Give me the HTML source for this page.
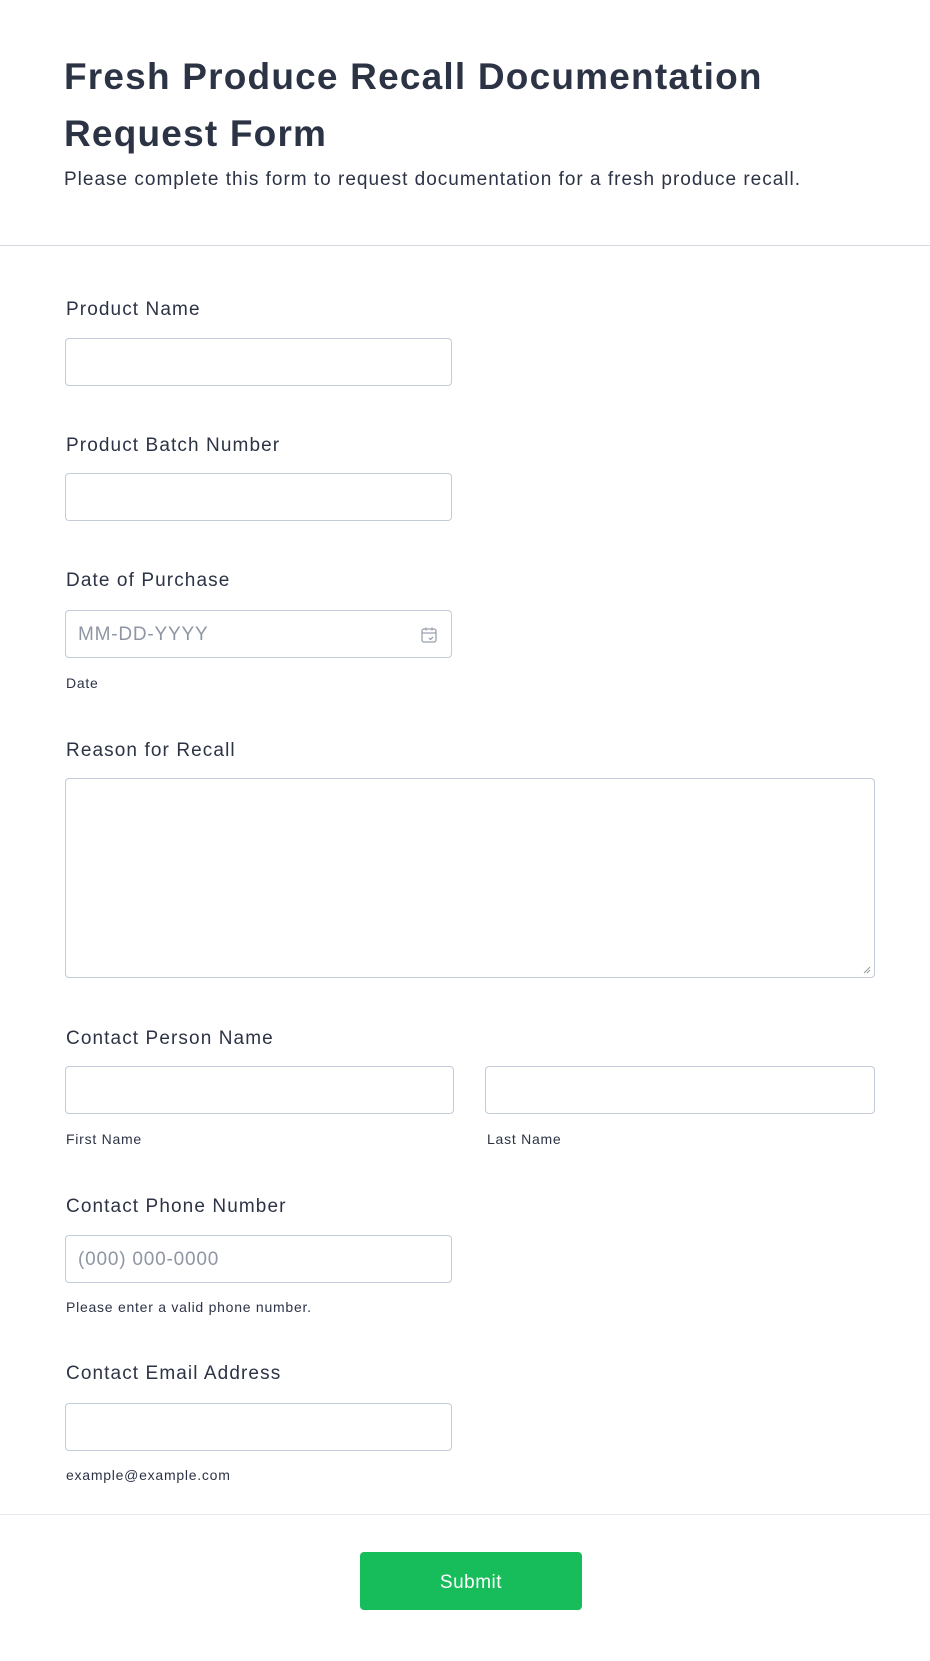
<!DOCTYPE html>
<html><head><meta charset="utf-8"><style>
*{box-sizing:border-box;margin:0;padding:0}
body{width:930px;height:1661px;background:#fff;font-family:"Liberation Sans",Arial,sans-serif;color:#2c3345;position:relative;overflow:hidden}
.a{position:absolute}
h1{position:absolute;left:64px;top:48px;font-size:37px;line-height:57px;font-weight:bold;color:#2c3345;width:860px;letter-spacing:1.2px}
.sub{left:64px;top:169px;font-size:19px;letter-spacing:1px}
.hr{left:0;width:930px;height:1px;background:#d3d7df}
.lab{left:66px;font-size:19px;color:#2c3345;letter-spacing:1.1px}
.in{border:1px solid #c3cad8;border-radius:4px;background:#fff;height:48px}
.sm{font-size:14px;color:#2c3345;letter-spacing:0.75px}
.ph{font-size:19px;color:#8f96a3;left:12px;top:13px;letter-spacing:0.8px}
</style></head><body>
<h1>Fresh Produce Recall Documentation Request Form</h1>
<div class="a sub">Please complete this form to request documentation for a fresh produce recall.</div>
<div class="a hr" style="top:245px"></div>

<div class="a lab" style="top:299px">Product Name</div>
<div class="a in" style="left:65px;top:338px;width:387px"></div>

<div class="a lab" style="top:435px">Product Batch Number</div>
<div class="a in" style="left:65px;top:473px;width:387px"></div>

<div class="a lab" style="top:570px">Date of Purchase</div>
<div class="a in" style="left:65px;top:610px;width:387px"><span class="a ph">MM-DD-YYYY</span>
<svg class="a" style="left:354px;top:15px" width="18" height="18" viewBox="0 0 18 18" fill="none" stroke="#9aa1ae" stroke-width="1.3"><rect x="2" y="3" width="14" height="13" rx="2"/><path d="M2 7h14M6 1.5v3M12 1.5v3M9 12l1.5 1.5L13 11"/></svg></div>
<div class="a sm" style="left:66px;top:675px">Date</div>

<div class="a lab" style="top:740px">Reason for Recall</div>
<div class="a in" style="left:65px;top:778px;width:810px;height:200px"><svg class="a" style="right:3px;bottom:3px" width="8" height="8" stroke="#999"><path d="M1 7L7 1M4 7L7 4"/></svg></div>

<div class="a lab" style="top:1028px">Contact Person Name</div>
<div class="a in" style="left:65px;top:1066px;width:389px"></div>
<div class="a in" style="left:485px;top:1066px;width:390px"></div>
<div class="a sm" style="left:66px;top:1131px">First Name</div>
<div class="a sm" style="left:487px;top:1131px">Last Name</div>

<div class="a lab" style="top:1196px">Contact Phone Number</div>
<div class="a in" style="left:65px;top:1235px;width:387px"><span class="a ph">(000) 000-0000</span></div>
<div class="a sm" style="left:66px;top:1299px">Please enter a valid phone number.</div>

<div class="a lab" style="top:1363px">Contact Email Address</div>
<div class="a in" style="left:65px;top:1403px;width:387px"></div>
<div class="a sm" style="left:66px;top:1467px">example@example.com</div>

<div class="a hr" style="top:1514px;background:#e6e9ef"></div>
<div class="a" style="left:360px;top:1552px;width:222px;height:58px;background:#18bd5b;border-radius:4px;color:#fff;font-size:19px;text-align:center;line-height:62px;letter-spacing:0.5px">Submit</div>
</body></html>
